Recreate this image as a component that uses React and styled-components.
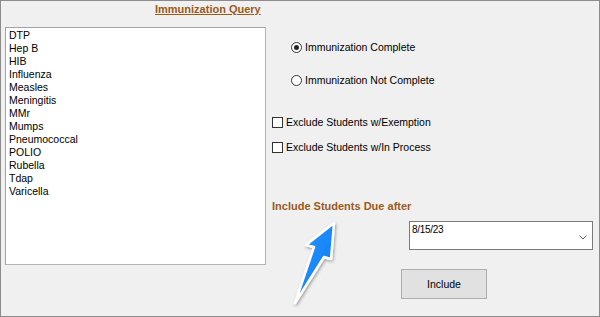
import React from "react";
import styled, { createGlobalStyle } from "styled-components";

const Global = createGlobalStyle`
  html, body { margin: 0; padding: 0; background: #f0f0f0; }
  body { font-family: "Liberation Sans", Arial, sans-serif; }
`;

const Frame = styled.div`
  position: relative;
  width: 600px;
  height: 317px;
  box-sizing: border-box;
  border: 1px solid #8c8c8c;
  background: #f0f0f0;
  display: flex;
  flex-direction: column;
  font-family: "Liberation Sans", Arial, sans-serif;
  font-size: 10.5px;
  color: #000;
  overflow: hidden;
`;

const Title = styled.div`
  height: 26px;
  padding-left: 154px;
  box-sizing: border-box;
  padding-top: 1px;
  line-height: 14px;
  font-size: 11px;
  font-weight: bold;
  color: #9a5a1c;
  text-decoration: underline;
`;

const Content = styled.div`
  display: flex;
  padding-left: 4px;
`;

const ListBox = styled.div`
  width: 261px;
  height: 238px;
  box-sizing: border-box;
  background: #fff;
  border: 1px solid #a3a3a3;
  border-right-color: #b4b4b4;
  border-bottom-color: #b4b4b4;
  padding: 1px 0 0 3px;
`;

const ListItem = styled.div`
  height: 13px;
  line-height: 13px;
  white-space: nowrap;
`;

const Side = styled.div`
  display: flex;
  flex-direction: column;
  align-items: flex-start;
`;

const OptionRow = styled.label`
  display: flex;
  align-items: center;
  height: 14px;
  line-height: 14px;
  margin-top: ${(p) => p.$top}px;
  margin-left: ${(p) => p.$left}px;
  gap: ${(p) => p.$gap}px;
  white-space: nowrap;
`;

const RadioCircle = styled.span`
  width: 11px;
  height: 11px;
  box-sizing: border-box;
  border-radius: 50%;
  border: 1px solid #333;
  background: #fff;
  display: flex;
  align-items: center;
  justify-content: center;
  &::after {
    content: "";
    width: 5px;
    height: 5px;
    border-radius: 50%;
    background: #222;
    display: ${(p) => (p.$on ? "block" : "none")};
  }
`;

const CheckBox = styled.span`
  width: 11px;
  height: 11px;
  box-sizing: border-box;
  border: 1px solid #333;
  background: #fff;
`;

const SectionLabel = styled.div`
  margin-top: 45px;
  margin-left: 6px;
  height: 14px;
  line-height: 14px;
  font-size: 11px;
  font-weight: bold;
  color: #9a5a1c;
  white-space: nowrap;
`;

const Combo = styled.div`
  margin-top: 8px;
  margin-left: 143px;
  width: 184px;
  height: 29px;
  box-sizing: border-box;
  background: #fff;
  border: 1px solid #7a7a7a;
  display: flex;
  justify-content: space-between;
  padding: 2px 5px 0 2px;
  font-size: 10px;
  line-height: 12px;
  letter-spacing: -0.3px;
`;

const Chevron = styled.svg`
  align-self: center;
  margin-top: 2px;
`;

const Button = styled.button`
  margin-top: 19px;
  margin-left: 135px;
  width: 86px;
  height: 30px;
  box-sizing: border-box;
  background: #e1e1e1;
  border: 1px solid #adadad;
  font-family: "Liberation Sans", Arial, sans-serif;
  font-size: 10.5px;
  color: #000;
  padding: 0;
`;

const ArrowLayer = styled.svg`
  position: absolute;
  left: 279px;
  top: 204px;
  overflow: visible;
`;

const items = [
  "DTP", "Hep B", "HIB", "Influenza", "Measles", "Meningitis", "MMr",
  "Mumps", "Pneumococcal", "POLIO", "Rubella", "Tdap", "Varicella",
];

export default function App() {
  return (
    <>
      <Global />
      <Frame>
        <Title>Immunization Query</Title>
        <Content>
          <ListBox>
            {items.map((t) => (
              <ListItem key={t}>{t}</ListItem>
            ))}
          </ListBox>
          <Side>
            <OptionRow $top={13} $left={25} $gap={3}>
              <RadioCircle $on />
              Immunization Complete
            </OptionRow>
            <OptionRow $top={19} $left={25} $gap={3}>
              <RadioCircle />
              Immunization Not Complete
            </OptionRow>
            <OptionRow $top={28} $left={6} $gap={3}>
              <CheckBox />
              Exclude Students w/Exemption
            </OptionRow>
            <OptionRow $top={11} $left={6} $gap={3}>
              <CheckBox />
              Exclude Students w/In Process
            </OptionRow>
            <SectionLabel>Include Students Due after</SectionLabel>
            <Combo>
              <span>8/15/23</span>
              <Chevron width="8" height="5" viewBox="0 0 8 5">
                <polyline points="0.5,0.5 4,4 7.5,0.5" fill="none" stroke="#606060" strokeWidth="1" />
              </Chevron>
            </Combo>
            <Button>Include</Button>
          </Side>
        </Content>
        <ArrowLayer width="72" height="112" viewBox="0 0 72 112">
          <defs>
            <linearGradient id="ag" x1="0" y1="0" x2="1" y2="1">
              <stop offset="0" stopColor="#2c96ff" />
              <stop offset="1" stopColor="#0a7af2" />
            </linearGradient>
            <filter id="sh" x="-30%" y="-30%" width="160%" height="160%">
              <feDropShadow dx="1" dy="1.5" stdDeviation="1.5" floodColor="#000" floodOpacity="0.35" />
            </filter>
          </defs>
          <polygon
            points="54,18 51,54 44,52 15,98 34,42 26,40"
            fill="url(#ag)"
            stroke="#fff"
            strokeWidth="2.5"
            strokeLinejoin="round"
            filter="url(#sh)"
          />
        </ArrowLayer>
      </Frame>
    </>
  );
}
